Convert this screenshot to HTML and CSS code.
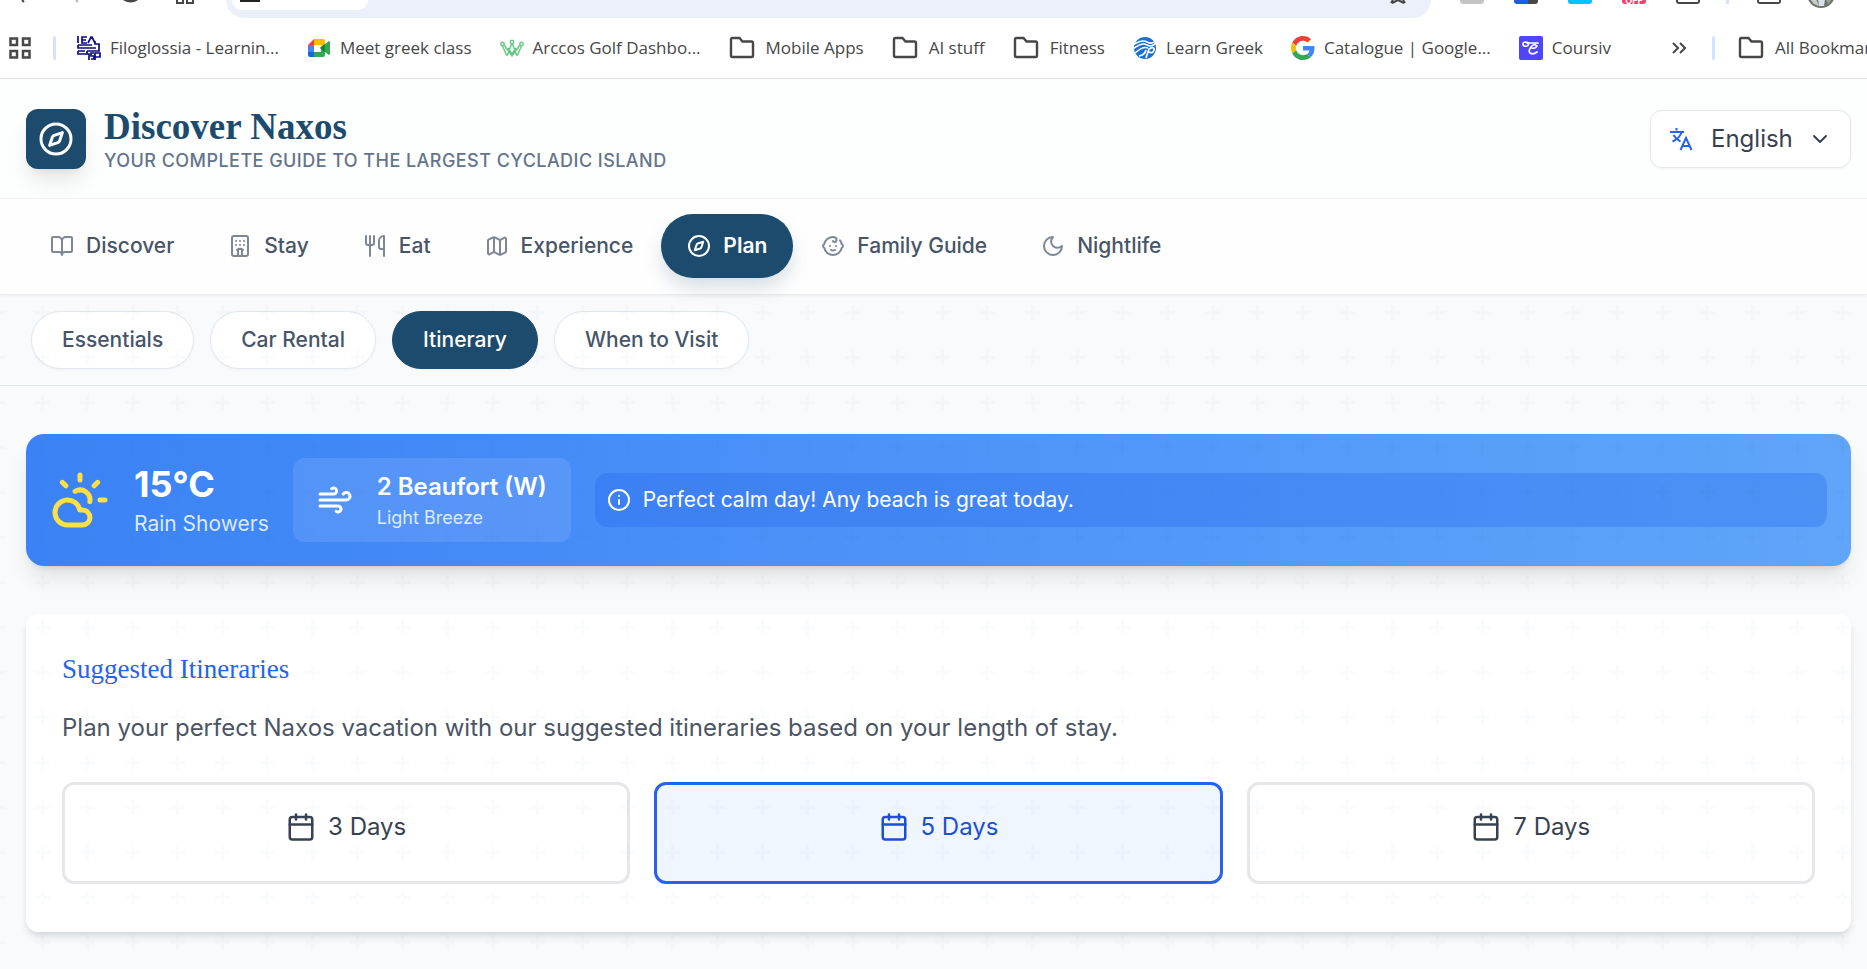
FILE: index.html
```html
<!DOCTYPE html>
<html lang="en">
<head>
<meta charset="utf-8">
<meta name="viewport" content="width=device-width, initial-scale=1">
<title>Discover Naxos</title>
<link rel="stylesheet" href="styles.css">
</head>
<body>
<svg class="defs" aria-hidden="true">
  <symbol id="folder" viewBox="0 0 26 24"><path d="M2 20.500V3.500q0-1.500 1.500-1.500h7l3 3.500h9q1.500 0 1.500 1.500v12.500q0 1.500-1.500 1.500h-19q-1.500 0-1.500-1.500z" fill="none" stroke="#474747" stroke-width="2.400"/></symbol>
  <symbol id="compass" viewBox="0 0 24 24"><path d="m16.240 7.760-1.804 5.411a2 2 0 0 1-1.265 1.265L7.760 16.240l1.804-5.411a2 2 0 0 1 1.265-1.265z"/><circle cx="12" cy="12" r="10"/></symbol>
  <symbol id="calendar" viewBox="0 0 24 24"><path d="M8 2v4M16 2v4M3 10h18"/><rect x="3" y="4" width="18" height="18" rx="2"/></symbol>
</svg>

<div class="toolbar">
  <div class="toolbar-left">
    <svg viewBox="0 0 226 18" width="226" height="18" fill="none" stroke="#474747" stroke-width="2"><path d="M22 0l2 2"/><path d="M76 0l2 2" stroke="#b5b5b5"/><path d="M124-1q7 4 13 0" stroke-width="3"/><path d="M177-4v7h6v-7M187-4v7h6v-7"/></svg>
  </div>
  <div class="omnibox">
    <div class="chip"><svg viewBox="0 0 20 2" width="20" height="2"><path d="M0 1h20" stroke="#222" stroke-width="2"/></svg></div>
    <svg viewBox="0 0 18 4" width="18" height="4" class="star"><path d="M2 3l2-3M16 3l-2-3M3 3l6-3 6 3" fill="none" stroke="#474747" stroke-width="2"/></svg>
  </div>
  <div class="toolbar-right">
    <span class="ext ext-grey"></span>
    <span class="ext ext-blue"></span>
    <span class="ext ext-cyan"></span>
    <span class="ext ext-off">OFF</span>
    <span class="ext ext-line"></span>
    <span class="ext-divider"></span>
    <span class="ext ext-panel"></span>
    <svg class="avatar" viewBox="0 0 28 8" width="28" height="8"><path d="M0-6a14 14 0 0 0 28 0z" fill="#6f7568"/><path d="M3-1l6 0 3 7-5-2z" fill="#c9cfc9"/><path d="M11-1h7l-1 7h-5z" fill="#dcdff0"/><path d="M19-1h6l-4 5z" fill="#9aa39a"/></svg>
  </div>
</div>

<nav class="bookmarks" aria-label="Bookmarks">
  <button class="apps" aria-label="Apps"><svg viewBox="0 0 22 22" width="22" height="22" fill="none" stroke="#474747" stroke-width="2.500"><path d="M1.500 1.500h6.500v6.500h-6.500zM14 1.500h6.500v6.500h-6.500zM1.500 14h6.500v6.500h-6.500zM14 14h6.500v6.500h-6.500z"/></svg></button>
  <span class="divider"></span>
  <div class="bookmark-list">
    <a class="bookmark" href="#"><svg viewBox="0 0 24 24" width="24" height="24" fill="none" stroke="#0b0b80" stroke-width="1.700"><path d="M1 0v7M10 1H5v6h5M5 4h4M11 7l3-6h1l3 6M18 5v3h4v7H10M1 9h14M1 9v3h18M1 15h7M1 15v3h9v-3M9 18h3v6M17 17h-3v3h3v3h-3M18 24v-7h5v4h-5"/></svg>Filoglossia - Learnin...</a>
    <a class="bookmark" href="#"><svg viewBox="0 0 24 24" width="24" height="24"><path d="M1 9l6-6v6z" fill="#ea4335"/><path d="M7 3h9q2 0 2 2v5l-4 3V9H7z" fill="#fbbc04"/><path d="M1 9h6v7H1z" fill="#4285f4"/><path d="M1 16h6v5H3q-2 0-2-2z" fill="#1967d2"/><path d="M7 16h7v-3l4-2v8q0 2-2 2H7z" fill="#34a853"/><path d="M13 12l9-7q1 0 1 1v12q0 1-1 1z" fill="#34a853"/><path d="M13 12l5-4v8z" fill="#188038"/></svg>Meet greek class</a>
    <a class="bookmark" href="#"><svg viewBox="0 0 24 24" width="24" height="24" fill="none" stroke="#69c983" stroke-width="1.500"><circle cx="2.500" cy="8" r="1.700"/><circle cx="12" cy="6" r="1.700"/><circle cx="21.500" cy="8" r="1.700"/><path d="M2.500 10l4 9h1l4-11M4 9l8 11 8-11M21.500 10l-4 9h-1l-4-11M8 12l4 6 4-6"/></svg>Arccos Golf Dashbo...</a>
    <a class="bookmark bookmark-folder" href="#"><svg width="26" height="24"><use href="#folder"/></svg>Mobile Apps</a>
    <a class="bookmark bookmark-folder" href="#"><svg width="26" height="24"><use href="#folder"/></svg>AI stuff</a>
    <a class="bookmark bookmark-folder" href="#"><svg width="26" height="24"><use href="#folder"/></svg>Fitness</a>
    <a class="bookmark" href="#"><svg viewBox="0 0 24 24" width="24" height="24"><circle cx="12" cy="12" r="11" fill="#1a6fd0"/><path d="M0 9Q9 3 14 6t10-2M0 13Q9 6 14 9t10-3M2 17q8-7 13-5" fill="none" stroke="#fff" stroke-width="1.500"/><path d="M6 20q6-1 7-6M13 22l3-9q6-3 5 1t-5 2" fill="none" stroke="#fff" stroke-width="1.700"/></svg>Learn Greek</a>
    <a class="bookmark" href="#"><svg viewBox="0 0 48 48" width="24" height="24"><path fill="#ea4335" d="M24 9.500c3.540 0 6.710 1.220 9.210 3.600l6.850-6.850C35.900 2.380 30.470 0 24 0 14.620 0 6.510 5.380 2.560 13.220l7.980 6.190C12.430 13.720 17.740 9.500 24 9.500z"/><path fill="#4285f4" d="M46.980 24.550c0-1.570-.15-3.090-.38-4.550H24v9.020h12.940c-.58 2.960-2.260 5.480-4.780 7.180l7.730 6c4.510-4.180 7.090-10.360 7.090-17.650z"/><path fill="#fbbc05" d="M10.530 28.590A14.500 14.500 0 0 1 9.770 24c0-1.600.28-3.140.76-4.590l-7.980-6.190A23.900 23.900 0 0 0 0 24c0 3.880.92 7.540 2.560 10.780z"/><path fill="#34a853" d="M24 48c6.480 0 11.930-2.130 15.890-5.810l-7.730-6c-2.150 1.450-4.920 2.300-8.160 2.300-6.260 0-11.570-4.220-13.470-9.910l-7.980 6.190C6.510 42.620 14.620 48 24 48z"/></svg>Catalogue | Google...</a>
    <a class="bookmark" href="#"><svg viewBox="0 0 24 24" width="24" height="24"><rect width="24" height="24" rx="2" fill="#4f46fb"/><path d="M10 7q-6-2-6 1t4 2q3-2 0-3M10 7h9M18 10q-3-3-6 1t-1 6q3 2 7-1M13 12q3 1 5-2" fill="none" stroke="#fff" stroke-width="1.700" stroke-linecap="round"/></svg>Coursiv</a>
  </div>
  <div class="bookmark-end">
    <button class="more" aria-label="More bookmarks"><svg viewBox="0 0 14 12" width="14" height="12" fill="none" stroke="#474747" stroke-width="2"><path d="M1 1l5 5-5 5M8 1l5 5-5 5"/></svg></button>
    <span class="divider"></span>
    <a class="bookmark bookmark-folder" href="#"><svg width="26" height="24"><use href="#folder"/></svg>All Bookmarks</a>
  </div>
</nav>

<header class="site-header">
  <div class="logo"><svg class="line-icon" width="36" height="36"><use href="#compass"/></svg></div>
  <div class="brand">
    <h1>Discover Naxos</h1>
    <p>Your complete guide to the largest Cycladic island</p>
  </div>
  <label class="language">
    <svg viewBox="0 0 24 24" width="24" height="24" fill="none" stroke="#2563eb" stroke-width="2"><path d="M7.500 1v2.500M1 5h14M12.500 5.500C11 9.500 8 12.500 3.500 14.500M4.500 8c2 3.500 4 5 7 6.500M11.500 23l5.500-12 5.500 12M13 19h8"/></svg>
    <select aria-label="Language"><option>English</option></select>
    <svg class="line-icon" viewBox="0 0 24 24" width="24" height="24"><path d="m6 9 6 6 6-6"/></svg>
  </label>
</header>

<nav class="main-nav" aria-label="Sections">
  <a href="#"><svg class="line-icon" viewBox="0 0 24 24" width="24" height="24"><path d="M12 7v14M3 18a1 1 0 0 1-1-1V4a1 1 0 0 1 1-1h5a4 4 0 0 1 4 4 4 4 0 0 1 4-4h5a1 1 0 0 1 1 1v13a1 1 0 0 1-1 1h-6a3 3 0 0 0-3 3 3 3 0 0 0-3-3z"/></svg>Discover</a>
  <a href="#"><svg class="line-icon" viewBox="0 0 24 24" width="24" height="24"><path d="M10 22v-6.570M12 11h.01M12 7h.01M14 15.430V22M15 16a5 5 0 0 0-6 0M16 11h.01M16 7h.01M8 11h.01M8 7h.01"/><rect x="4" y="2" width="16" height="20" rx="2"/></svg>Stay</a>
  <a href="#"><svg class="line-icon" viewBox="0 0 24 24" width="24" height="24"><path d="M3 2v7c0 1.100.9 2 2 2h4a2 2 0 0 0 2-2V2M7 2v20M21 15V2a5 5 0 0 0-5 5v6c0 1.100.9 2 2 2h3Zm0 0v7"/></svg>Eat</a>
  <a href="#"><svg class="line-icon" viewBox="0 0 24 24" width="24" height="24"><path d="M14.106 5.553a2 2 0 0 0 1.788 0l3.659-1.830A1 1 0 0 1 21 4.619v12.764a1 1 0 0 1-.553.894l-4.553 2.277a2 2 0 0 1-1.788 0l-4.212-2.106a2 2 0 0 0-1.788 0l-3.659 1.830A1 1 0 0 1 3 19.381V6.618a1 1 0 0 1 .553-.894l4.553-2.277a2 2 0 0 1 1.788 0zM15 5.764v15M9 3.236v15"/></svg>Experience</a>
  <a href="#" class="active" aria-current="page"><svg class="line-icon" width="24" height="24"><use href="#compass"/></svg>Plan</a>
  <a href="#"><svg class="line-icon" viewBox="0 0 24 24" width="24" height="24"><path d="M9 12h.01M15 12h.01M10 16c.5.3 1.200.5 2 .5s1.500-.2 2-.5M19 6.300a9 9 0 0 1 1.800 3.900 2 2 0 0 1 0 3.600 9 9 0 0 1-17.600 0 2 2 0 0 1 0-3.600A9 9 0 0 1 12 3c2 0 3.500 1.100 3.500 2.500s-.9 2.500-2 2.500c-.8 0-1.500-.4-1.500-1"/></svg>Family Guide</a>
  <a href="#"><svg class="line-icon" viewBox="0 0 24 24" width="24" height="24"><path d="M12 3a6 6 0 0 0 9 9 9 9 0 1 1-9-9Z"/></svg>Nightlife</a>
</nav>

<div class="page">
  <nav class="sub-nav" aria-label="Plan">
    <a href="#">Essentials</a>
    <a href="#">Car Rental</a>
    <a href="#" class="active" aria-current="page">Itinerary</a>
    <a href="#">When to Visit</a>
  </nav>

  <main class="content">
    <section class="weather" aria-label="Weather">
      <svg class="line-icon sun" viewBox="0 0 24 24" width="60" height="60"><path d="M12 2v2M4.930 4.930l1.410 1.410M20 12h2M19.070 4.930l-1.410 1.410M15.947 12.650a4 4 0 0 0-5.925-4.128M13 22H7a5 5 0 1 1 4.900-6H13a3 3 0 0 1 0 6Z"/></svg>
      <div class="now">
        <strong>15°C</strong>
        <span>Rain Showers</span>
      </div>
      <div class="wind">
        <svg class="line-icon" viewBox="0 0 24 24" width="36" height="36"><path d="M12.800 19.600A2 2 0 1 0 14 16H2M17.500 8a2.500 2.500 0 1 1 2 4H2M9.800 4.400A2 2 0 1 1 11 8H2"/></svg>
        <div>
          <strong>2 Beaufort (W)</strong>
          <span>Light Breeze</span>
        </div>
      </div>
      <p class="advice"><svg class="line-icon" viewBox="0 0 24 24" width="24" height="24"><circle cx="12" cy="12" r="10"/><path d="M12 16v-4M12 8h.01"/></svg>Perfect calm day! Any beach is great today.</p>
    </section>

    <section class="card">
      <h2>Suggested Itineraries</h2>
      <p>Plan your perfect Naxos vacation with our suggested itineraries based on your length of stay.</p>
      <div class="days">
        <button><svg class="line-icon" width="30" height="30"><use href="#calendar"/></svg>3 Days</button>
        <button class="selected" aria-pressed="true"><svg class="line-icon" width="30" height="30"><use href="#calendar"/></svg>5 Days</button>
        <button><svg class="line-icon" width="30" height="30"><use href="#calendar"/></svg>7 Days</button>
      </div>
    </section>
  </main>
</div>
</body>
</html>
```
FILE: styles.css
```css
* { box-sizing: border-box; margin: 0; padding: 0; }

body {
  font-family: Inter, "Liberation Sans", sans-serif;
  font-size: 24px;
  line-height: 36px;
  color: #374151;
  background: #f9fafc;
  min-height: 100vh;
  overflow: hidden;
  display: flex;
  flex-direction: column;
}

a { color: inherit; text-decoration: none; }
button, select { font: inherit; color: inherit; background: none; border: 0; }
svg { flex: none; display: block; }
.defs { position: absolute; width: 0; height: 0; }
.line-icon { fill: none; stroke: currentColor; stroke-width: 2; stroke-linecap: round; stroke-linejoin: round; }

/* Browser toolbar */
.toolbar { display: flex; height: 18px; background: #fff; overflow: hidden; flex: none; }
.toolbar-left { width: 226px; flex: none; }
.omnibox {
  flex: 1;
  display: flex;
  align-items: flex-start;
  justify-content: space-between;
  background: #ecf0fa;
  border-radius: 0 0 24px 24px;
  padding: 0 24px 0 6px;
}
.chip { width: 136px; height: 10px; background: #fff; border-radius: 0 0 16px 16px; padding-left: 8px; }
.toolbar-right { width: 436px; flex: none; display: flex; align-items: flex-start; padding-left: 29px; gap: 30px; }
.ext { width: 24px; height: 4px; flex: none; overflow: hidden; border-radius: 0 0 3px 3px; }
.ext-grey { background: #c4c4c4; }
.ext-blue { background: linear-gradient(90deg, #1a5fe0 60%, #474747 60%); }
.ext-cyan { background: #00c3ff; }
.ext-off { background: #ff3b67; color: #fff; font-size: 9px; font-weight: 700; line-height: 2px; text-align: center; }
.ext-line, .ext-panel { border: 2px solid #474747; border-top: 0; }
.ext-divider { width: 3px; height: 4px; background: #d3e3fd; margin-left: -4px; margin-right: -2px; }
.avatar { margin-left: -4px; }

/* Bookmarks */
.bookmarks {
  display: flex;
  align-items: center;
  height: 61px;
  flex: none;
  background: #fff;
  border-bottom: 1px solid #dfe1e3;
  font-family: "Open Sans", "Noto Sans", sans-serif;
  font-size: 17px;
  line-height: 24px;
  color: #474747;
  padding-left: 9px;
  overflow: hidden;
}
.divider { width: 3px; height: 24px; flex: none; background: #d3e3fd; border-radius: 2px; }
.apps { margin-right: 22px; }
.bookmark-list { flex: 1; min-width: 0; overflow: hidden; display: flex; gap: 28px; padding-left: 21px; }
.bookmark { display: flex; align-items: center; gap: 9px; white-space: nowrap; flex: none; }
.bookmark-folder { gap: 11px; }
.bookmark-end { flex: none; width: 195px; display: flex; align-items: center; overflow: hidden; }
.more { margin-right: 26px; }
.bookmark-end .bookmark { margin-left: 23px; }

/* Site header */
.site-header {
  display: flex;
  align-items: center;
  gap: 18px;
  padding: 28px 16px 27px 26px;
  background: #fdfefe;
  border-bottom: 1px solid #f1f3f5;
}
.logo {
  width: 60px;
  height: 60px;
  display: grid;
  place-items: center;
  color: #fff;
  background: #1c4b6e;
  border-radius: 12px;
  box-shadow: 0 15px 22px -4px rgba(0, 0, 0, .1), 0 6px 9px -6px rgba(0, 0, 0, .1);
}
.brand { flex: 1; }
.brand h1 { font-family: "Liberation Serif", serif; font-size: 37px; line-height: 40px; font-weight: 700; color: #1c4b6e; }
.brand p { font-size: 18px; line-height: 20px; margin-top: 4px; font-weight: 500; letter-spacing: .45px; text-transform: uppercase; color: #64748b; }
.language {
  display: flex;
  align-items: center;
  padding: 9px 18px;
  background: #fff;
  border: 1px solid #e5e7eb;
  border-radius: 12px;
  box-shadow: 0 1px 3px rgba(0, 0, 0, .05);
}
.language select { appearance: none; padding: 0 15px 0 18px; height: 38px; }

/* Primary navigation */
.main-nav {
  display: flex;
  gap: 2px;
  padding: 15px 24px 16px;
  background: #fefefe;
  border-bottom: 1px solid #e9ecef;
  box-shadow: 0 1px 3px rgba(0, 0, 0, .06);
  font-size: 21px;
  line-height: 30px;
  font-weight: 500;
  color: #475569;
  position: relative;
  z-index: 1;
}
.main-nav a { display: flex; align-items: center; gap: 12px; padding: 17px 26px; border-radius: 32px; }
.main-nav svg { opacity: .7; }
.main-nav .active { background: #1c4b6e; color: #fff; font-weight: 600; box-shadow: 0 10px 20px -2px rgba(28, 75, 110, .2); }
.main-nav .active svg { opacity: 1; }

/* Page body with its repeating plus texture */
.page { position: relative; flex: 1; }
.page::after {
  content: "";
  position: absolute;
  inset: 10px 0 0;
  pointer-events: none;
  background: url("data:image/svg+xml,%3Csvg xmlns='http://www.w3.org/2000/svg' width='45' height='45'%3E%3Cpath d='M0 6h15v3H0zM6 0h3v15H6z' fill='%231c4b6e' fill-opacity='.025'/%3E%3C/svg%3E") 35px 0;
}
.sub-nav {
  display: flex;
  gap: 16px;
  padding: 16px 31px;
  border-bottom: 1px solid #e2e8f0;
  font-size: 21px;
  line-height: 32px;
  font-weight: 500;
  color: #475569;
}
.sub-nav a { padding: 12px 30px; border: 1px solid #e2e8f0; border-radius: 29px; background: #fff; box-shadow: 0 1px 3px rgba(0, 0, 0, .04); }
.sub-nav .active { color: #fff; background: #1c4b6e; border-color: #1c4b6e; }

.content { display: flex; flex-direction: column; gap: 48px; padding: 48px 16px 36px 26px; }

/* Weather */
.weather {
  display: flex;
  align-items: center;
  gap: 24px;
  padding: 24px;
  color: #fff;
  background: linear-gradient(90deg, #3b82f6, #60a5fa);
  border-radius: 18px;
  box-shadow: 0 15px 22px -4px rgba(0, 0, 0, .1), 0 6px 9px -6px rgba(0, 0, 0, .15);
}
.weather strong, .weather span { display: block; white-space: nowrap; }
.sun { color: #fde047; }
.now strong { font-size: 36px; line-height: 48px; font-weight: 700; }
.now span { font-size: 21px; line-height: 32px; color: #dbeafe; }
.wind { display: flex; align-items: center; gap: 24px; padding: 11px 24px; background: rgba(255, 255, 255, .1); border-radius: 12px; }
.wind strong { font-weight: 600; line-height: 36px; }
.wind span { font-size: 18px; line-height: 26px; color: #dbeafe; }
.advice {
  flex: 1;
  display: flex;
  align-items: center;
  gap: 12px;
  padding: 12px;
  font-size: 21px;
  line-height: 30px;
  background: rgba(37, 99, 235, .3);
  border-radius: 12px;
}

/* Itineraries */
.card {
  padding: 36px 36px 48px;
  background: #fff;
  border-radius: 12px;
  box-shadow: 0 6px 9px -1px rgba(0, 0, 0, .1), 0 3px 6px -3px rgba(0, 0, 0, .1);
}
.card h2 { font-family: "Liberation Serif", serif; font-size: 27px; line-height: 38px; font-weight: 400; color: #2563eb; margin-bottom: 22px; }
.card p { color: #4b5563; margin-bottom: 36px; }
.days { display: grid; grid-template-columns: repeat(3, 1fr); gap: 24px; }
.days button {
  display: flex;
  align-items: center;
  justify-content: center;
  gap: 12px;
  padding: 24px 24px 36px;
  border: 3px solid #e5e7eb;
  border-radius: 12px;
}
.days .selected { color: #1d4ed8; background: #eff6ff; border-color: #2563eb; }
```
